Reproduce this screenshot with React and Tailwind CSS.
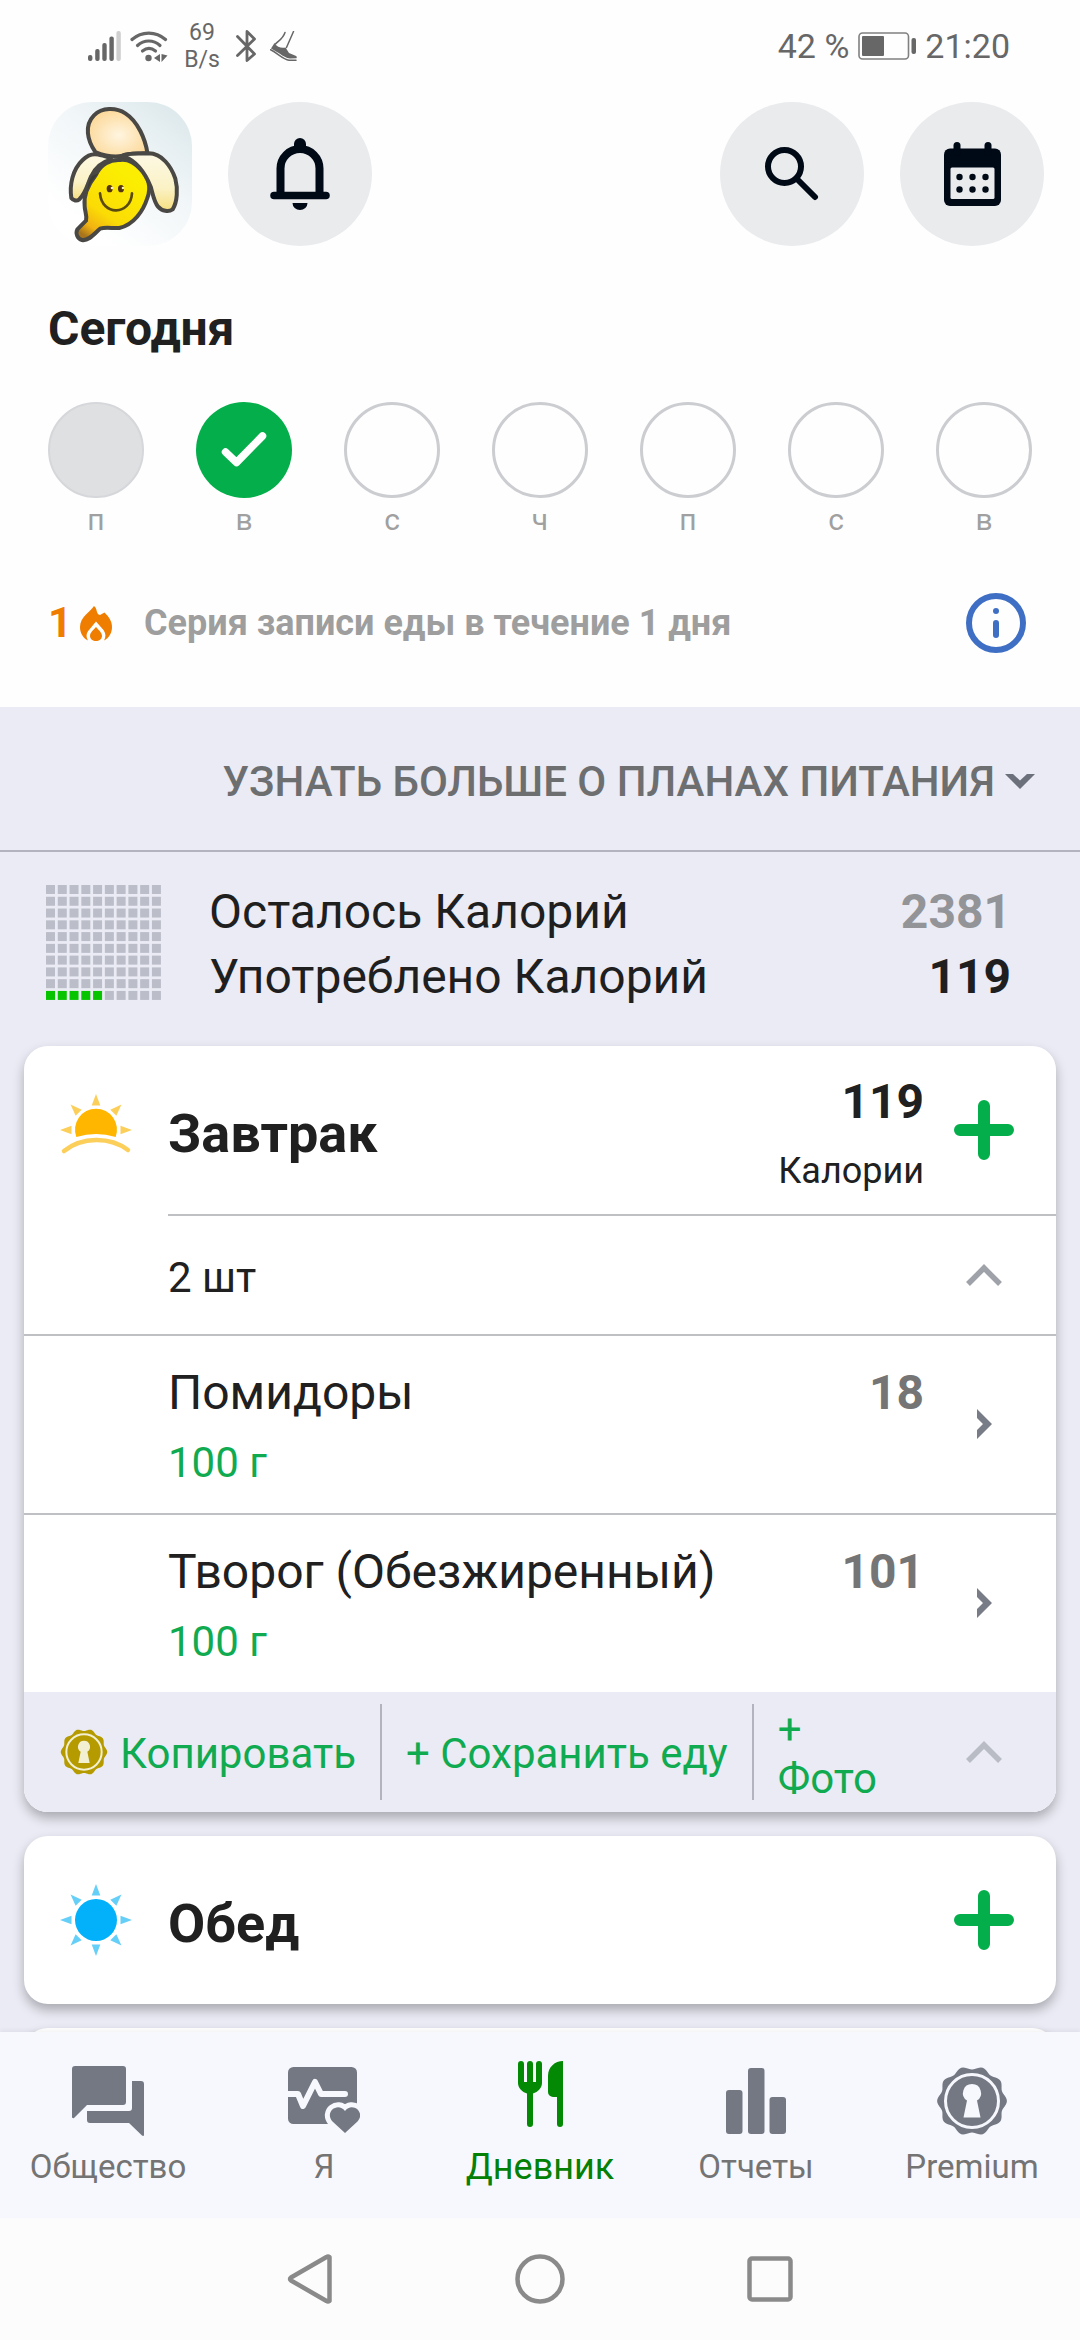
const DAYS = [
  { label: "п", name: "понедельник", state: "past" },
  { label: "в", name: "вторник", state: "done" },
  { label: "с", name: "среда", state: "empty" },
  { label: "ч", name: "четверг", state: "empty" },
  { label: "п", name: "пятница", state: "empty" },
  { label: "с", name: "суббота", state: "empty" },
  { label: "в", name: "воскресенье", state: "empty" },
];

const FOODS = [
  { name: "Помидоры", amount: "100 г", calories: 18 },
  { name: "Творог (Обезжиренный)", amount: "100 г", calories: 101 },
];

/* ---------- status bar ---------- */

function SignalIcon() {
  return (
    <svg width="33" height="30" viewBox="0 0 33 30" fill="#676767">
      <rect x="0" y="24" width="4.4" height="6" rx="2" />
      <rect x="7.2" y="18" width="4.4" height="12" rx="2" />
      <rect x="14.3" y="12" width="4.4" height="18" rx="2" />
      <rect x="21.4" y="5.5" width="4.4" height="24.5" rx="2" />
      <rect x="28.4" y="0" width="4.4" height="30" rx="2" fill="#cfcfcf" />
    </svg>
  );
}

function WifiIcon() {
  return (
    <svg width="38" height="31" viewBox="0 0 38 31" fill="none" stroke="#676767" strokeWidth="3.2" strokeLinecap="round">
      <path d="M2 8.5C11.500-.1 26-.1 35.500 8.500" />
      <path d="M7.500 14.500c6.500-6 16-6 22.500 0" />
      <path d="M12.500 20c4-3.200 9-3.200 13 0" />
      <circle cx="18.500" cy="27" r="3.200" fill="#676767" stroke="none" />
      <path d="M30 23v8l-6-4zM31.500 23v8l6-6.500z" fill="#676767" stroke="none" />
    </svg>
  );
}

function BluetoothIcon() {
  return (
    <svg width="20" height="32" viewBox="0 0 20 32" fill="none" stroke="#676767" strokeWidth="2.800" strokeLinecap="round" strokeLinejoin="round">
      <path d="M1.500 6.500 18.500 24 11 30.500V1.500L18.500 9 1.500 25.500" />
    </svg>
  );
}

function ShoeIcon() {
  return (
    <svg width="28" height="31" viewBox="0 0 28 31" fill="none">
      <path d="M15 1.500C13 8 8 10 5.500 13M23.500.5 16.500 16.500" stroke="#676767" strokeWidth="1.500" strokeLinecap="round" />
      <path d="M4.500 12 1 17.500l8.500 5c4 2.800 6.500 4.500 10.500 5l6.500-.3c.8-1.400 0-2.200-1.500-2.700l-6-2.500-3.500-5.500c-3.500 1-8.500 0-11-4.500z" fill="#676767" />
      <path d="M.6 18.800c6.500 3 12.400 9.800 18.400 10.400h7" stroke="#676767" strokeWidth="1.500" strokeLinecap="round" />
    </svg>
  );
}

function BatteryIcon() {
  return (
    <svg width="58" height="28" viewBox="0 0 58 28" fill="none">
      <rect x="1" y="1" width="49.500" height="26" rx="3.500" stroke="#808080" strokeWidth="1.600" />
      <rect x="4" y="4" width="22" height="20" rx="1" fill="#676767" />
      <rect x="53.500" y="6" width="4.500" height="16" rx="2" fill="#676767" />
    </svg>
  );
}

function StatusBar() {
  return (
    <div className="flex h-[90px] items-center justify-between pr-[70px] pl-[88px] text-[34px] leading-10 text-[#676767]">
      <div className="flex items-center pt-[2px]">
        <SignalIcon />
        <span className="ml-[9px]">
          <WifiIcon />
        </span>
        <span className="ml-4 w-[36px] text-center text-[23px] leading-[27px]">
          69
          <br />
          B/s
        </span>
        <span className="ml-4">
          <BluetoothIcon />
        </span>
        <span className="ml-[14px]">
          <ShoeIcon />
        </span>
      </div>
      <div className="flex items-center gap-[9px] pt-[2px]">
        <span>42 %</span>
        <BatteryIcon />
        <span>21:20</span>
      </div>
    </div>
  );
}

/* ---------- header ---------- */

function BananaAvatar() {
  return (
    <svg className="h-36 w-36 rounded-[44px]" viewBox="24 18 432 432" role="img" aria-label="Профиль">
      <defs>
        <linearGradient id="sky" x1="1" y1="0" x2="0.300" y2="0.900">
          <stop offset="0" stopColor="#d9e6ea" />
          <stop offset="0.500" stopColor="#f1f6f8" />
          <stop offset="1" stopColor="#ffffff" />
        </linearGradient>
        <radialGradient id="flesh" cx="0.520" cy="0.550" r="0.600">
          <stop offset="0" stopColor="#fff5e0" />
          <stop offset="1" stopColor="#fcd795" />
        </radialGradient>
        <linearGradient id="skin" x1="0.700" y1="0.200" x2="0.200" y2="1">
          <stop offset="0" stopColor="#fbee02" />
          <stop offset="0.600" stopColor="#fbdc05" />
          <stop offset="0.850" stopColor="#f2b312" />
          <stop offset="1" stopColor="#a8741c" />
        </linearGradient>
        <linearGradient id="peel" x1="0.500" y1="0" x2="0.500" y2="1">
          <stop offset="0" stopColor="#fdf8e4" />
          <stop offset="0.600" stopColor="#fbf2c6" />
          <stop offset="1" stopColor="#f6df80" />
        </linearGradient>
      </defs>
      <rect x="24" y="18" width="432" height="432" fill="url(#sky)" />
      <g stroke="#4a4844" strokeWidth="12" strokeLinejoin="round" strokeLinecap="round">
        <path d="M166 168C142 134 132 88 162 58c24-24 66-24 94-6 38 24 60 78 66 118-24 6-50-2-76 10-24 4-56-2-80-12z" fill="url(#flesh)" />
        <path d="M214 190c-30 8-48 24-60 50-12 24-16 52-36 70-8 6-18 4-24-4-6-40 4-86 34-114 16-16 32-20 48-16 14 2 28 4 38 14z" fill="url(#peel)" />
        <path d="M240 192c-30-2-58 14-72 44-22 28-38 62-34 94 0 16 8 28 4 44l-26 26c-6 12 0 28 14 32 20 4 38-20 54-34 20-6 38 0 58-2 44-10 72-52 84-90 12-30 4-64-18-84-18-18-36-34-64-30z" fill="url(#skin)" />
        <path d="M244 180c24-12 58-6 82-8 40 0 68 40 80 76 8 30 6 70-8 92-12 8-32 6-44-8-12-14-16-40-22-60-14-34-38-74-78-90z" fill="url(#peel)" />
      </g>
      <path d="M176 232c-14 14-28 34-34 54 2-22 6-34 14-46z" fill="#3d3b38" />
      <path d="M180 292c6 70 92 66 96 0" fill="none" stroke="#5a4a10" strokeWidth="8" strokeLinecap="round" />
      <ellipse cx="209" cy="278" rx="9" ry="11" fill="#54340f" />
      <ellipse cx="243" cy="278" rx="9" ry="11" fill="#54340f" />
      <circle cx="216" cy="276" r="4" fill="#f7efc0" />
      <circle cx="249" cy="276" r="4" fill="#f7efc0" />
    </svg>
  );
}

function RoundButton({ label, children }) {
  return (
    <button type="button" aria-label={label} className="flex h-36 w-36 items-center justify-center rounded-full bg-[#e9ebed]">
      {children}
    </button>
  );
}

function BellIcon() {
  return (
    <svg width="60" height="72" viewBox="0 0 60 72" fill="none">
      <path d="M10.500 56V30.500a19.500 19.500 0 0 1 39 0V56" stroke="#000916" strokeWidth="8" />
      <path d="M4 57.500h52" stroke="#000916" strokeWidth="7.500" strokeLinecap="round" />
      <path d="M24 10V6a6 6 0 0 1 12 0v4zM22.500 65h15a7.500 7 0 0 1-15 0z" fill="#000916" />
    </svg>
  );
}

function SearchIcon() {
  return (
    <svg width="54" height="54" viewBox="0 0 54 54" fill="none" stroke="#000916" strokeWidth="6" strokeLinecap="round">
      <circle cx="19.500" cy="19.500" r="16.500" />
      <path d="m31.500 31.500 18.500 18.500" />
    </svg>
  );
}

function CalendarIcon() {
  return (
    <svg width="57" height="64" viewBox="0 0 57 64">
      <rect y="6.500" width="57" height="57.500" rx="6" fill="#000916" />
      <rect x="9.500" width="7" height="14" rx="3.500" fill="#000916" />
      <rect x="40.500" width="7" height="14" rx="3.500" fill="#000916" />
      <rect x="6.500" y="25.500" width="44" height="31.500" rx="1.500" fill="#e9ebed" />
      <g fill="#000916">
        {[15.5, 28.5, 41.5].map((x) => (
          <g key={x}>
            <circle cx={x} cy="35" r="3.200" />
            <circle cx={x} cy="47.500" r="3.200" />
          </g>
        ))}
      </g>
    </svg>
  );
}

function Header() {
  return (
    <header className="flex items-center justify-between pt-3 pr-9 pl-12">
      <div className="flex gap-9">
        <BananaAvatar />
        <RoundButton label="Уведомления">
          <BellIcon />
        </RoundButton>
      </div>
      <div className="flex gap-9">
        <RoundButton label="Поиск">
          <SearchIcon />
        </RoundButton>
        <RoundButton label="Календарь">
          <CalendarIcon />
        </RoundButton>
      </div>
    </header>
  );
}

/* ---------- week strip ---------- */

function DayCircle({ state, name }) {
  if (state === "done") {
    return (
      <button type="button" aria-label={name} className="h-24 w-24 rounded-full bg-[#04ae4a]">
        <svg width="96" height="96" viewBox="0 0 96 96" fill="none">
          <path d="M29.500 50 40.500 60.500 66.500 34" stroke="#fff" strokeWidth="7.500" strokeLinecap="round" strokeLinejoin="round" />
        </svg>
      </button>
    );
  }
  if (state === "past") {
    return <button type="button" aria-label={name} className="h-24 w-24 rounded-full border-2 border-[#d6d7da] bg-[#dfe0e2]" />;
  }
  return <button type="button" aria-label={name} className="h-24 w-24 rounded-full border-3 border-[#cccdd1]" />;
}

function WeekStrip() {
  return (
    <ul className="mt-[45px] flex justify-between px-12">
      {DAYS.map((day, i) => (
        <li key={i} className="flex flex-col items-center gap-1 text-[30px] leading-9 text-[#a0a0a0]">
          <DayCircle state={day.state} name={day.name} />
          <span>{day.label}</span>
        </li>
      ))}
    </ul>
  );
}

function FlameIcon() {
  return (
    <svg width="32" height="35" viewBox="0 0 32 35" fill="#ef7d00">
      <path d="M14 0C10 6 0 11 0 21c0 6 3 11 8 13.500-2-4-2-7 1-10.500l7-8.500 7.500 8.500c2.500 3.500 2.500 7 .5 10.500 5-2.500 8-7.500 8-13.500 0-6-3-10-7.500-14.500L20 9c-4.500-1-2-6-6-9z" />
      <path d="M16 21c-2.500 3-6 5.500-6 9 0 3 3 5 6 5s6-2 6-5c0-3.500-3.500-6-6-9z" />
    </svg>
  );
}

function Streak() {
  return (
    <div className="mt-[55px] mb-[54px] flex items-center pr-[54px] pl-12">
      <div className="flex w-24 items-center gap-2 text-[42px] leading-[48px] font-bold text-[#ef7d00]">
        <span>1</span>
        <FlameIcon />
      </div>
      <p className="flex-1 text-[36px] leading-[42px] font-bold text-[#9e9e9e]">Серия записи еды в течение 1 дня</p>
      <button type="button" aria-label="Информация">
        <svg width="60" height="60" viewBox="0 0 60 60" fill="none" stroke="#3f6fc4" strokeWidth="6" strokeLinecap="round">
          <circle cx="30" cy="30" r="27" />
          <path d="M30 30v12" />
          <circle cx="30" cy="18" r="3" fill="#3f6fc4" stroke="none" />
        </svg>
      </button>
    </div>
  );
}

/* ---------- plans and summary ---------- */

function PlansLink() {
  return (
    <button type="button" className="flex h-[145px] w-full items-center justify-end gap-[10px] border-b-2 border-[#b2b3be] pt-[6px] pr-[45px] text-[42px] leading-[48px] font-medium text-[#6d6e70]">
      УЗНАТЬ БОЛЬШЕ О ПЛАНАХ ПИТАНИЯ
      <svg width="30" height="15" viewBox="0 0 30 15">
        <path d="M0 0h8l7 6.500L22 0h8L15 15z" fill="#6c707b" />
      </svg>
    </button>
  );
}

function CalorieGrid({ filled }) {
  const cells = Array.from({ length: 100 }, (_, i) => ({ col: i % 10, row: Math.floor(i / 10) }));
  return (
    <svg width="115" height="115" viewBox="0 0 115 115" className="mt-[6px] shrink-0">
      {cells.map(({ col, row }) => (
        <rect
          key={`${col}-${row}`}
          x={col * 11.77}
          y={row * 11.77}
          width="9"
          height="9"
          fill={row === 9 && col < filled ? "#07c400" : "#bbbec8"}
        />
      ))}
    </svg>
  );
}

function Summary() {
  return (
    <div className="flex pt-[27px] pr-[69px] pb-[37px] pl-[46px]">
      <CalorieGrid filled={5} />
      <dl className="ml-12 flex-1 text-[48px] leading-[65px] text-[#1f1f1f]">
        <div className="flex justify-between">
          <dt>Осталось Калорий</dt>
          <dd className="font-bold text-[#939498]">2381</dd>
        </div>
        <div className="flex justify-between">
          <dt>Употреблено Калорий</dt>
          <dd className="font-bold">119</dd>
        </div>
      </dl>
    </div>
  );
}

/* ---------- meals ---------- */

function Rays({ angles, color }) {
  return (
    <g fill={color}>
      {angles.map((a) => (
        <path key={a} d="M0-36 4.300-24.500h-8.600z" transform={`rotate(${a})`} />
      ))}
    </g>
  );
}

function SunriseIcon() {
  return (
    <svg width="72" height="72" viewBox="-36 -36 72 72">
      <Rays angles={[-90, -45, 0, 45, 90]} color="#fccf5a" />
      <path d="M-19.700 7A21 21 0 1 1 19.700 7Q0 1-19.700 7z" fill="#ffb600" />
      <path d="M-32 21c18-14.500 46-14.500 64-1" fill="none" stroke="#fccf5a" strokeWidth="4.500" strokeLinecap="round" />
    </svg>
  );
}

function SunIcon() {
  return (
    <svg width="72" height="72" viewBox="-36 -36 72 72">
      <Rays angles={[0, 45, 90, 135, 180, 225, 270, 315]} color="#66cff8" />
      <circle r="21" fill="#02b1fa" />
    </svg>
  );
}

function AddButton({ label }) {
  return (
    <button type="button" aria-label={label} className="flex h-[120px] w-[120px] items-center justify-center">
      <svg width="60" height="60" viewBox="0 0 60 60" stroke="#04ae4a" strokeWidth="12" strokeLinecap="round">
        <path d="M30 6v48M6 30h48" />
      </svg>
    </button>
  );
}

function UpChevron({ color }) {
  return (
    <svg width="36" height="22" viewBox="0 0 36 22" fill="none" stroke={color} strokeWidth="5.500">
      <path d="M2 20 18 4l16 16" />
    </svg>
  );
}

function MealHeader({ icon, title, children }) {
  return (
    <div className="flex h-[168px] items-center pr-3">
      <span className="flex w-36 justify-center">{icon}</span>
      <h2 className="flex-1 pt-2 text-[54px] leading-[64px] font-bold">{title}</h2>
      {children}
      <AddButton label={`Добавить: ${title}`} />
    </div>
  );
}

function FoodRow({ name, amount, calories }) {
  return (
    <button type="button" className="flex w-full border-t-2 border-[#bfc0c4] pr-3 pl-36 text-left">
      <span className="flex flex-1 flex-col gap-[18px] pt-[29px] pb-[26px]">
        <span className="text-[48px] leading-[56px]">{name}</span>
        <span className="text-[42px] leading-[48px] text-[#10aa50]">{amount}</span>
      </span>
      <span className="pt-[29px] text-[48px] leading-[56px] font-bold text-[#757575]">{calories}</span>
      <span className="flex w-[120px] items-center justify-center self-stretch pb-[2px]">
        <svg width="15" height="30" viewBox="0 0 15 30">
          <path d="M0 0 15 15 0 30v-9l6-6-6-6z" fill="#787c86" />
        </svg>
      </span>
    </button>
  );
}

const BADGE_OUTLINE =
  Array.from({ length: 120 }, (_, i) => {
    const a = (i * Math.PI) / 60;
    const r = 33.2 + 1.7 * Math.cos(a * 10);
    return `${i ? "L" : "M"}${(r * Math.cos(a)).toFixed(2)} ${(r * Math.sin(a)).toFixed(2)}`;
  }).join("") + "z";

function BadgeIcon({ size, color, line }) {
  return (
    <svg width={size} height={size} viewBox="-36 -36 72 72">
      <path d={BADGE_OUTLINE} fill={color} />
      <circle r="26.500" fill="none" stroke={line} strokeWidth="3" />
      <path d="M0-17a9 9 0 0 1 5 16.500l3.500 17h-17L-5-.5A9 9 0 0 1 0-17z" fill={line} />
    </svg>
  );
}

function Breakfast() {
  return (
    <section className="overflow-hidden rounded-3xl bg-white">
      <MealHeader icon={<SunriseIcon />} title="Завтрак">
        <div className="flex flex-col gap-5 pt-[6px] text-right">
          <span className="text-[48px] leading-[56px] font-bold">119</span>
          <span className="text-[36px] leading-[42px]">Калории</span>
        </div>
      </MealHeader>
      <div className="ml-36 border-t-2 border-[#bfc0c4]" />
      <button type="button" className="flex h-[118px] w-full items-center pr-3 pl-36 text-left text-[42px] leading-[48px]">
        <span className="flex-1 pt-[6px]">2 шт</span>
        <span className="flex w-[120px] justify-center">
          <UpChevron color="#9fa2a9" />
        </span>
      </button>
      {FOODS.map((food) => (
        <FoodRow key={food.name} {...food} />
      ))}
      <div className="flex h-[120px] items-center bg-[#eaebf4] pr-3 text-[42px] leading-[49px] text-[#10aa50]">
        <button type="button" className="flex items-center gap-3 pr-6 pl-9">
          <BadgeIcon size={48} color="#b59a00" line="#f3f0d2" />
          <span className="pt-[3px]">Копировать</span>
        </button>
        <span className="h-24 w-[2px] bg-[#b2b3be]" />
        <button type="button" className="px-6 pt-[3px]">+ Сохранить еду</button>
        <span className="h-24 w-[2px] bg-[#b2b3be]" />
        <button type="button" className="ml-6 w-[120px] pt-[3px] text-left">+ Фото</button>
        <button type="button" aria-label="Свернуть" className="ml-auto flex w-[120px] justify-center">
          <UpChevron color="#b9bbc5" />
        </button>
      </div>
    </section>
  );
}

/* ---------- bottom navigation ---------- */

function CommunityIcon() {
  return (
    <svg width="72" height="70" viewBox="0 0 72 70" fill="#747883">
      <path d="M3 0h48a3 3 0 0 1 3 3v33a3 3 0 0 1-3 3H15L2 52q-1 .6-2-.5V3a3 3 0 0 1 3-3z" />
      <path d="M60 15h9a3 3 0 0 1 3 3v51.500q-1 .8-2 0L57 57H18a3 3 0 0 1-3-3v-9h42a3 3 0 0 0 3-3z" />
    </svg>
  );
}

function HealthIcon() {
  return (
    <svg width="72" height="68" viewBox="0 0 72 68">
      <rect width="69" height="57" rx="5.500" fill="#747883" />
      <path d="M0 27h10l5 12 12-24 6 12h24" fill="none" stroke="#f7f8fe" strokeWidth="6" strokeLinecap="round" strokeLinejoin="round" />
      <path
        d="M57 66 44.500 54.500C36 45 50 34.500 57 44c7-9.500 21 1 12.500 10.500z"
        fill="#747883"
        stroke="#f7f8fe"
        strokeWidth="10"
        paintOrder="stroke"
      />
    </svg>
  );
}

function DiaryIcon() {
  return (
    <svg width="45" height="66" viewBox="0 0 45 66" fill="#048904">
      <path d="M0 3a3 3 0 0 1 6 0v18h3V3a3 3 0 0 1 6 0v18h3V3a3 3 0 0 1 6 0v19c0 5-4 9-9 10.500V63a3 3 0 0 1-6 0V32.500C4 31 0 27 0 22z" />
      <path d="M45 0v63a3 3 0 0 1-6 0V36h-4a5 5 0 0 1-5-5V15C30 6 37 0 45 0z" />
    </svg>
  );
}

function ReportsIcon() {
  return (
    <svg width="60" height="66" viewBox="0 0 60 66" fill="#747883">
      <rect y="22" width="16.500" height="44" rx="3" />
      <rect x="22" width="16.500" height="66" rx="3" />
      <rect x="43.500" y="29" width="16.500" height="37" rx="3" />
    </svg>
  );
}

const TABS = [
  { label: "Общество", icon: <CommunityIcon /> },
  { label: "Я", icon: <HealthIcon /> },
  { label: "Дневник", icon: <DiaryIcon />, active: true },
  { label: "Отчеты", icon: <ReportsIcon /> },
  { label: "Premium", icon: <BadgeIcon size={72} color="#747883" line="#f7f8fe" /> },
];

function BottomNav() {
  return (
    <nav className="relative grid h-[186px] shrink-0 grid-cols-5 bg-[#f7f8fe] shadow-[0_-2px_4px_rgba(0,0,0,0.05)]">
      {TABS.map((tab) => (
        <a
          key={tab.label}
          href="#"
          aria-current={tab.active ? "page" : undefined}
          className={
            tab.active
              ? "flex flex-col items-center pt-[27px] text-[36px] leading-10 text-[#048004]"
              : "flex flex-col items-center pt-8 text-[33px] leading-10 text-[#747474]"
          }
        >
          <span className={tab.active ? "flex h-[88px] items-start pt-[2px]" : "flex h-[83px] items-start pt-1"}>
            <span className="flex h-[66px] items-center">{tab.icon}</span>
          </span>
          {tab.label}
        </a>
      ))}
    </nav>
  );
}

function SystemBar() {
  return (
    <div className="flex h-[122px] shrink-0 items-center justify-center gap-[180px] bg-[#fcfcfc]">
      <button type="button" aria-label="Назад">
        <svg width="50" height="50" viewBox="0 0 50 50" fill="none" stroke="#8a8a8a" strokeWidth="4.500" strokeLinejoin="round">
          <path d="M44.500 3v44q-1.500 1-3 0L6 26.500q-2-1.500 0-3L41.500 3q1.500-1 3 0z" />
        </svg>
      </button>
      <button type="button" aria-label="Домой">
        <svg width="50" height="50" viewBox="0 0 50 50" fill="none" stroke="#8a8a8a" strokeWidth="4.500">
          <circle cx="25" cy="25" r="22.500" />
        </svg>
      </button>
      <button type="button" aria-label="Недавние">
        <svg width="50" height="50" viewBox="0 0 50 50" fill="none" stroke="#8a8a8a" strokeWidth="4.500">
          <rect x="4.500" y="4.500" width="41" height="41" rx="2.500" />
        </svg>
      </button>
    </div>
  );
}

export default function App() {
  return (
    <div className="flex h-dvh flex-col overflow-hidden bg-[#eaebf4] font-[Roboto,sans-serif] text-[#202020]">
      <main className="min-h-0 flex-1 overflow-hidden">
        <div className="flow-root bg-[#fefefe]">
          <StatusBar />
          <Header />
          <h1 className="mt-[55px] px-12 text-[48px] leading-[56px] font-bold">Сегодня</h1>
          <WeekStrip />
          <Streak />
        </div>
        <PlansLink />
        <Summary />
        <div className="flex flex-col gap-6 px-6">
          <div className="rounded-3xl shadow-[0_6px_12px_rgba(0,0,0,0.28)]">
            <Breakfast />
          </div>
          <section className="rounded-3xl bg-white shadow-[0_6px_12px_rgba(0,0,0,0.28)]">
            <MealHeader icon={<SunIcon />} title="Обед" />
          </section>
          <section aria-label="Ужин" className="h-[168px] rounded-3xl bg-white shadow-[0_6px_12px_rgba(0,0,0,0.28)]" />
        </div>
      </main>
      <BottomNav />
      <SystemBar />
    </div>
  );
}
